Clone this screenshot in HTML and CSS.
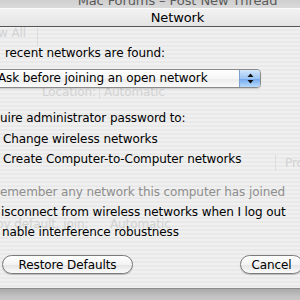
FILE: index.html
```html
<!DOCTYPE html>
<html lang="en">
<head>
  <meta charset="UTF-8">
  <title>Network - AirPort Options</title>
  <link rel="stylesheet" href="styles.css">
</head>
<body>

  <div class="back-title"><span>Mac Forums &ndash; Post New Thread</span></div>
  <div class="titlebar">Network</div>

  <div class="sheet">
    <!-- faint window content seen through the sheet -->
    <div class="ghost">
      <span class="g g-show">w All</span>
      <span class="g-line g-line1"></span>
      <span class="g g-loc">Location:</span>
      <span class="g-line g-line2"></span>
      <span class="g g-auto">Automatic</span>
      <span class="g-line g-line3"></span>
      <span class="g g-prox">Pro</span>
      <span class="g g-join">by default, join:</span>
      <span class="g g-auto2">Automatic</span>
    </div>

    <div class="row row-found">recent networks are found:</div>

    <div class="popup">
      <span class="popup-text">Ask before joining an open network</span>
      <span class="popup-arrows">
        <svg width="7" height="11" viewBox="0 0 7 11">
          <path d="M3.5 0.5 L6.5 4 L0.5 4 Z" fill="#111"/>
          <path d="M0.5 7 L6.5 7 L3.5 10.5 Z" fill="#111"/>
        </svg>
      </span>
    </div>

    <div class="row row-admin">uire administrator password to:</div>
    <div class="row row-check">Change wireless networks</div>
    <div class="row row-check">Create Computer-to-Computer networks</div>

    <div class="row row-off">emember any network this computer has joined</div>
    <div class="row row-disc">isconnect from wireless networks when I log out</div>
    <div class="row row-enable">nable interference robustness</div>

    <div class="buttons">
      <button class="pill pill-restore">Restore Defaults</button>
      <button class="pill pill-cancel">Cancel</button>
    </div>
  </div>

  <div class="sheet-shadow"></div>

</body>
</html>
```

FILE: styles.css
```css
body {
  margin: 0;
  width: 300px;
  height: 300px;
  overflow: hidden;
  font-family: "DejaVu Sans", sans-serif;
  font-size: 12px;
  letter-spacing: -0.1px;
  color: #000;
  background: #d6d6d6;
}
.back-title {
  height: 8px;
  overflow: hidden;
  background: linear-gradient(#cfcfcf, #dadada);
  padding-left: 55px;
  text-align: center;
  color: #5a5a5a;
  font-size: 13px;
}
.back-title span {
  display: block;
  margin-top: -7px;
  line-height: 16px;
}
.titlebar {
  height: 17px;
  line-height: 17px;
  padding-left: 55px;
  text-align: center;
  font-size: 13px;
  background: linear-gradient(#f2f2f2, #e4e4e4);
  border-top: 1px solid #fafafa;
  border-bottom: 1px solid #555;
  box-sizing: content-box;
}
.sheet {
  position: relative;
  height: 245px;
  padding-top: 16px;
  background: repeating-linear-gradient(180deg, #f0f0f0 0 2px, #e9e9e9 2px 4px);
  border-bottom: 1px solid #8c8c8c;
  box-sizing: content-box;
}
.ghost {
  position: absolute;
  inset: 0;
  color: #d2d2d2;
}
.g {
  position: absolute;
  line-height: 14px;
}
.g-line {
  position: absolute;
  width: 1px;
  background: #dcdcdc;
}
.g-show { left: -2px; top: -1px; }
.g-line1 { left: 37px; top: 1px; height: 18px; }
.g-loc { left: 42px; top: 58px; }
.g-line2 { left: 99px; top: 56px; height: 16px; }
.g-auto { left: 104px; top: 58px; }
.g-line3 { left: 275px; top: 128px; height: 16px; }
.g-prox { left: 285px; top: 129px; }
.g-join { left: -4px; top: 190px; }
.g-auto2 { left: 110px; top: 190px; }

.row {
  position: relative;
  height: 20px;
  line-height: 20px;
  white-space: nowrap;
}
.row-found { padding-left: 5px; }
.popup {
  position: relative;
  display: flex;
  width: 279px;
  height: 17px;
  margin: 6px 0 0 -20px;
  border: 1px solid #8a8a8a;
  border-radius: 4px;
  overflow: hidden;
  background: linear-gradient(#ffffff, #f6f6f6 50%, #ebebeb 51%, #fbfbfb);
  box-shadow: 0 1px 1px rgba(0, 0, 0, 0.15);
}
.popup-text {
  flex: 1;
  line-height: 17px;
  padding-left: 17px;
  white-space: nowrap;
}
.popup-arrows {
  width: 20px;
  display: flex;
  align-items: center;
  justify-content: center;
  border-left: 1px solid #7d9fcc;
  background: linear-gradient(#d3e6fc, #9cc4f3 50%, #6fa6ec 51%, #b9dbff);
}
.row-admin { margin-top: 20px; }
.row-check { padding-left: 3px; }
.row-admin + .row-check { margin-top: 1px; }
.row-off { margin-top: 13px; color: #8e8e8e; }
.row-disc { padding-left: 1px; }
.row-enable { padding-left: 2px; }

.buttons {
  position: relative;
  display: flex;
  justify-content: space-between;
  margin: 13px -3px 0 2px;
}
.pill {
  height: 19px;
  padding: 1px 0 0;
  font-family: "DejaVu Sans", sans-serif;
  font-size: 12px;
  letter-spacing: -0.1px;
  line-height: 16px;
  color: #000;
  border: 1px solid #7a7a7a;
  border-radius: 10px;
  background: linear-gradient(#ffffff, #f3f3f3 50%, #e3e3e3 51%, #fbfbfb);
  box-shadow: 0 1px 1px rgba(0, 0, 0, 0.2);
}
.pill-restore { width: 131px; }
.pill-cancel { width: 63px; }

.sheet-shadow {
  height: 20px;
  background: linear-gradient(#a9a9a9, #c4c4c4 40%, #cdcdcd);
}
```
